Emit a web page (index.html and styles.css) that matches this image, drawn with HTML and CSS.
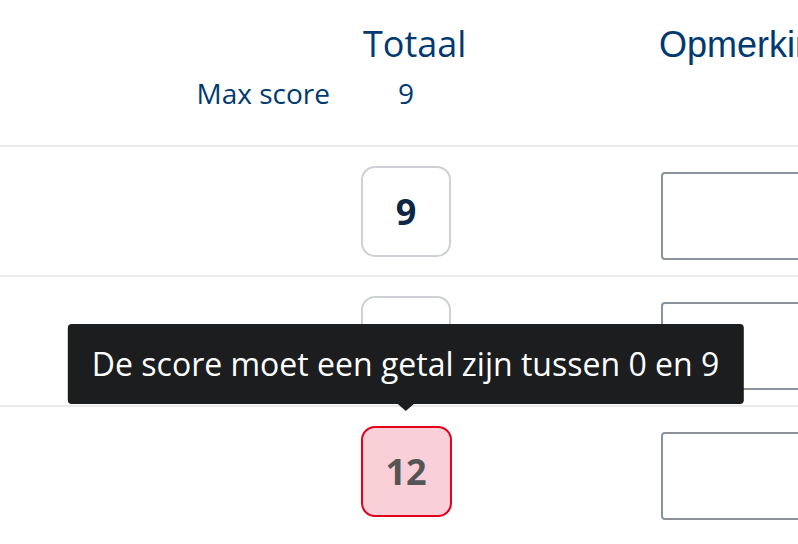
FILE: index.html
```html
<!DOCTYPE html>
<html lang="nl">
<head>
<meta charset="utf-8">
<title>Scores</title>
<link rel="stylesheet" href="styles.css">
</head>
<body>
<div class="table">
  <div class="head">
    <div class="cell-label"></div>
    <div class="cell-title"><div class="title">Totaal</div></div>
    <div class="cell-remark"><div class="title remark-title">Opmerkingen</div></div>
    <div class="cell-label max-label">Max score</div>
    <div class="max-value">9</div>
    <div class="cell-remark"></div>
  </div>

  <div class="row">
    <div class="cell-label"></div>
    <div class="cell-score"><div class="score-box">9</div></div>
    <div class="cell-remark"><textarea class="remark"></textarea></div>
  </div>

  <div class="row">
    <div class="cell-label"></div>
    <div class="cell-score"><div class="score-box"></div></div>
    <div class="cell-remark"><textarea class="remark"></textarea></div>
  </div>

  <div class="row">
    <div class="cell-label"></div>
    <div class="cell-score">
      <div class="score-wrap">
        <div class="tooltip">De score moet een getal zijn tussen 0 en 9</div>
        <div class="score-box invalid">12</div>
      </div>
    </div>
    <div class="cell-remark"><textarea class="remark"></textarea></div>
  </div>
</div>
</body>
</html>
```

FILE: styles.css
```css
html, body {
  margin: 0;
  padding: 0;
  background: #ffffff;
  overflow: hidden;
}

body {
  width: 798px;
  height: 544px;
  font-family: "Open Sans", "Liberation Sans", sans-serif;
  color: #003a70;
}

.table {
  display: flex;
  flex-direction: column;
}

.head,
.row {
  display: grid;
  grid-template-columns: 361px 90px 1fr;
}

.head {
  height: 145px;
  box-sizing: border-box;
  padding-top: 19px;
  row-gap: 6px;
  grid-template-rows: 49px 38px;
  align-items: baseline;
}

.title {
  font-size: 36px;
  line-height: 49px;
  white-space: nowrap;
  color: #003a70;
}

.cell-title .title {
  padding-left: 2px;
}

.remark-title {
  font-family: "Liberation Sans", Arial, sans-serif;
  margin-left: -2px;
}

.max-label {
  font-size: 28px;
  line-height: 38px;
  text-align: right;
  padding-right: 31px;
}

.max-value {
  font-size: 28px;
  line-height: 38px;
  text-align: center;
}

.row {
  height: 130px;
  box-sizing: border-box;
  border-top: 2px solid #ebebeb;
  padding-top: 19px;
  align-items: start;
}

.cell-score {
  display: flex;
  justify-content: center;
}

.score-wrap {
  position: relative;
}

.score-box {
  width: 91px;
  height: 91px;
  box-sizing: border-box;
  border: 2px solid #cdd1d5;
  border-radius: 14px;
  display: flex;
  align-items: center;
  justify-content: center;
  font-size: 36px;
  font-weight: 700;
  color: #0d2745;
  background: #ffffff;
}

.score-box.invalid {
  background: #f9d0d8;
  border-color: #e2001a;
  color: #555555;
}

.cell-remark {
  padding-left: 210px;
}

.remark {
  display: block;
  margin: 6px 0 0 0;
  width: 300px;
  height: 88px;
  box-sizing: border-box;
  border: 2px solid #8a939b;
  border-radius: 4px;
  background: #ffffff;
  resize: none;
  padding: 6px;
}

.tooltip {
  position: absolute;
  left: 50%;
  bottom: calc(100% + 22px);
  transform: translateX(-50%);
  white-space: nowrap;
  background: #1c1d1f;
  color: #ffffff;
  font-size: 32px;
  line-height: 48px;
  padding: 16px 25px 16px 24px;
  border-radius: 4px;
  z-index: 2;
}

.tooltip::after {
  content: "";
  position: absolute;
  left: 50%;
  top: 100%;
  margin-left: -8px;
  border-left: 8px solid transparent;
  border-right: 8px solid transparent;
  border-top: 7px solid #1c1d1f;
}
```
